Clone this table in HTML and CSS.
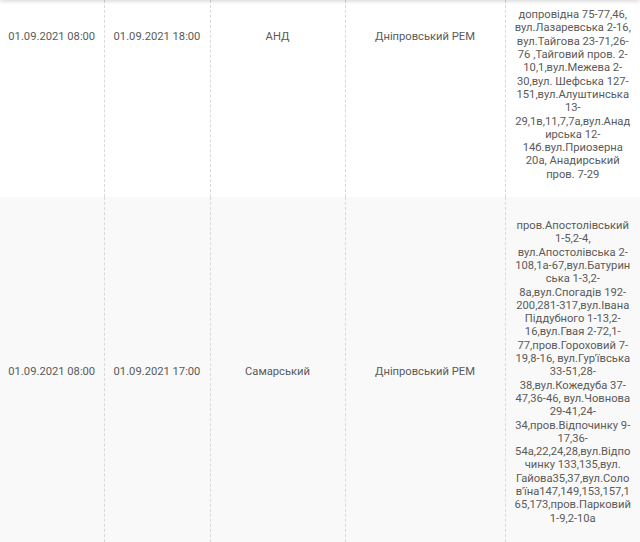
FILE: index.html
```html
<!DOCTYPE html>
<html lang="uk">
<head>
<meta charset="utf-8">
<title>Графік відключень</title>
<link rel="stylesheet" href="styles.css">
</head>
<body>
<div class="header-shadow"></div>
<table class="grid">
  <colgroup>
    <col class="c-start">
    <col class="c-end">
    <col class="c-place">
    <col class="c-rem">
    <col class="c-addr">
  </colgroup>
  <tbody>
    <tr class="row row-a">
      <td class="cell top">01.09.2021 08:00</td>
      <td class="cell top">01.09.2021 18:00</td>
      <td class="cell top">АНД</td>
      <td class="cell top">Дніпровський РЕМ</td>
      <td class="cell addr bottom">допровідна 75-77,46, вул.Лазаревська 2-16, вул.Тайгова 23-71,26-76 ,Тайговий пров. 2-10,1,вул.Межева 2-30,вул. Шефська 127-151,вул.Алуштинська 13-29,1в,11,7,7а,вул.Анадирська 12-14б.вул.Приозерна 20а, Анадирський пров. 7-29</td>
    </tr>
    <tr class="row row-b">
      <td class="cell">01.09.2021 08:00</td>
      <td class="cell">01.09.2021 17:00</td>
      <td class="cell">Самарський</td>
      <td class="cell">Дніпровський РЕМ</td>
      <td class="cell addr">пров.Апостолівський 1-5,2-4, вул.Апостолівська 2-108,1а-67,вул.Батуринська 1-3,2-8а,вул.Спогадів 192-200,281-317,вул.Івана Піддубного 1-13,2-16,вул.Гвая 2-72,1-77,пров.Гороховий 7-19,8-16, вул.Гур'ївська 33-51,28-38,вул.Кожедуба 37-47,36-46, вул.Човнова 29-41,24-34,пров.Відпочинку 9-17,36-54а,22,24,28,вул.Відпочинку 133,135,вул. Гайова35,37,вул.Солов'їна147,149,153,157,165,173,пров.Парковий 1-9,2-10а</td>
    </tr>
  </tbody>
</table>
</body>
</html>
```

FILE: styles.css
```css
html, body {
  margin: 0;
  padding: 0;
  background: #ffffff;
  overflow: hidden;
}

body {
  font-family: Roboto, "Liberation Sans", Arial, sans-serif;
  font-size: 11.2px;
  line-height: 13.3px;
  color: #5a5a5a;
}

.header-shadow {
  position: fixed;
  top: -10px;
  left: 0;
  right: 0;
  height: 10px;
  background: #ffffff;
  box-shadow: 0 1px 4px rgba(0, 0, 0, 0.18);
  z-index: 5;
}

.grid {
  width: 640px;
  table-layout: fixed;
  border-collapse: collapse;
  border-spacing: 0;
}

.c-start { width: 104px; }
.c-end { width: 106px; }
.c-place { width: 135px; }
.c-rem { width: 160px; }
.c-addr { width: 135px; }

.row-a { height: 197px; background: #ffffff; }
.row-b { height: 350px; background: #f9f9f9; }

.cell {
  text-align: center;
  vertical-align: middle;
  padding: 15px 8px;
  border-left: 1px dashed #d9d9d9;
  overflow-wrap: anywhere;
  white-space: normal;
}

.cell:first-child {
  border-left: none;
}

.cell.top {
  vertical-align: top;
  padding-top: 30px;
}

.cell.bottom {
  vertical-align: bottom;
  padding-top: 0;
  padding-bottom: 16px;
}
```
